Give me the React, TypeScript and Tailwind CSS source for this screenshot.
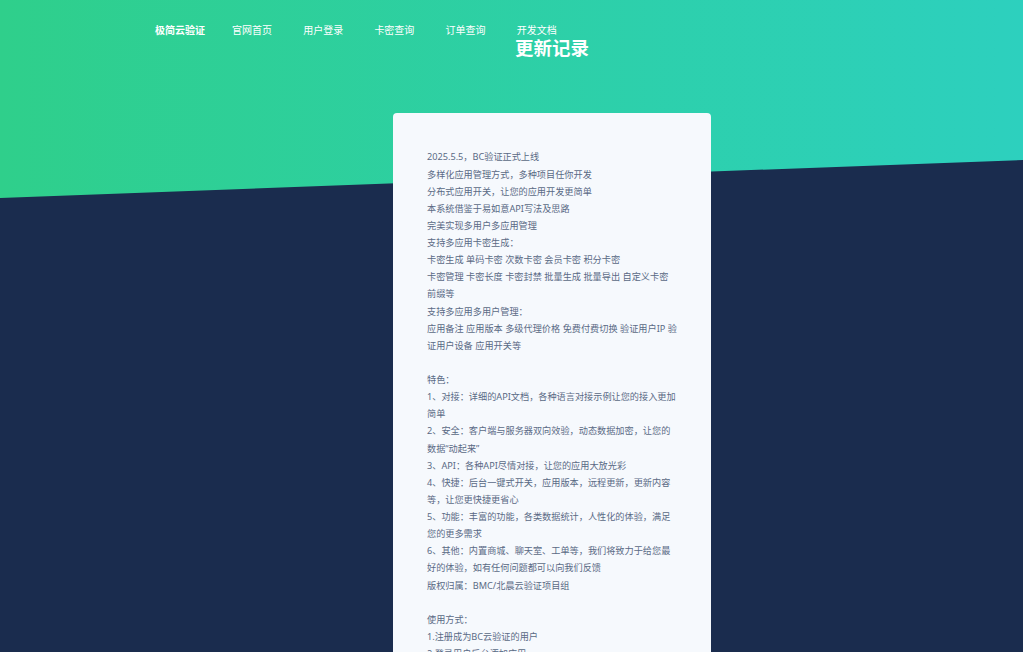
const navItems = ['官网首页', '用户登录', '卡密查询', '订单查询', '开发文档'];

const lines = [
  '2025.5.5，BC验证正式上线',
  '多样化应用管理方式，多种项目任你开发',
  '分布式应用开关，让您的应用开发更简单',
  '本系统借鉴于易如意API写法及思路',
  '完美实现多用户多应用管理',
  '支持多应用卡密生成：',
  '卡密生成 单码卡密 次数卡密 会员卡密 积分卡密',
  '卡密管理 卡密长度 卡密封禁 批量生成 批量导出 自定义卡密前缀等',
  '支持多应用多用户管理：',
  '应用备注 应用版本 多级代理价格 免费付费切换 验证用户IP 验证用户设备 应用开关等',
  '',
  '特色：',
  '1、对接：详细的API文档，各种语言对接示例让您的接入更加简单',
  '2、安全：客户端与服务器双向效验，动态数据加密，让您的数据“动起来”',
  '3、API：各种API尽情对接，让您的应用大放光彩',
  '4、快捷：后台一键式开关，应用版本，远程更新，更新内容等，让您更快捷更省心',
  '5、功能：丰富的功能，各类数据统计，人性化的体验，满足您的更多需求',
  '6、其他：内置商城、聊天室、工单等，我们将致力于给您最好的体验，如有任何问题都可以向我们反馈',
  '版权归属：BMC/北晨云验证项目组',
  '',
  '使用方式：',
  '1.注册成为BC云验证的用户',
  '2.登录用户后台添加应用',
  '3.对接API接口到您的程序',
];

export default function App() {
  return (
    <div className="relative h-[652px] overflow-hidden bg-[#1a2c4e] font-['Noto_Sans','Noto_Sans_CJK_SC',sans-serif]">
      {/* 顶部渐变 */}
      <div className="h-[198px] bg-gradient-to-r from-[#2fcf8b] to-[#2dd0be] [clip-path:polygon(0_0,100%_0,100%_160px,0_100%)]" />

      <div className="absolute inset-x-0 top-0">
        <nav className="flex h-[60px] items-center pl-[155px] text-[10px] text-white">
          <span className="mr-[27px] font-bold">极简云验证</span>
          <div className="flex gap-[31.2px]">
            {navItems.map((item) => (
              <span key={item}>{item}</span>
            ))}
          </div>
        </nav>

        <div className="ml-[393px] w-[318px]">
          <h1 className="-mt-[24.5px] text-center text-[18.5px] leading-[24px] font-bold text-white">更新记录</h1>
          <div className="mt-[53.5px] rounded-[4px] bg-[#f6f9fd] px-[34px] pt-[35.4px] pb-10 text-[9.17px] leading-[17.12px] text-[#5a6a85] [word-spacing:0.1px]">
            {lines.map((line, i) => (
              <p key={i} className="min-h-[17.12px]">{line}</p>
            ))}
          </div>
        </div>
      </div>
    </div>
  );
}
